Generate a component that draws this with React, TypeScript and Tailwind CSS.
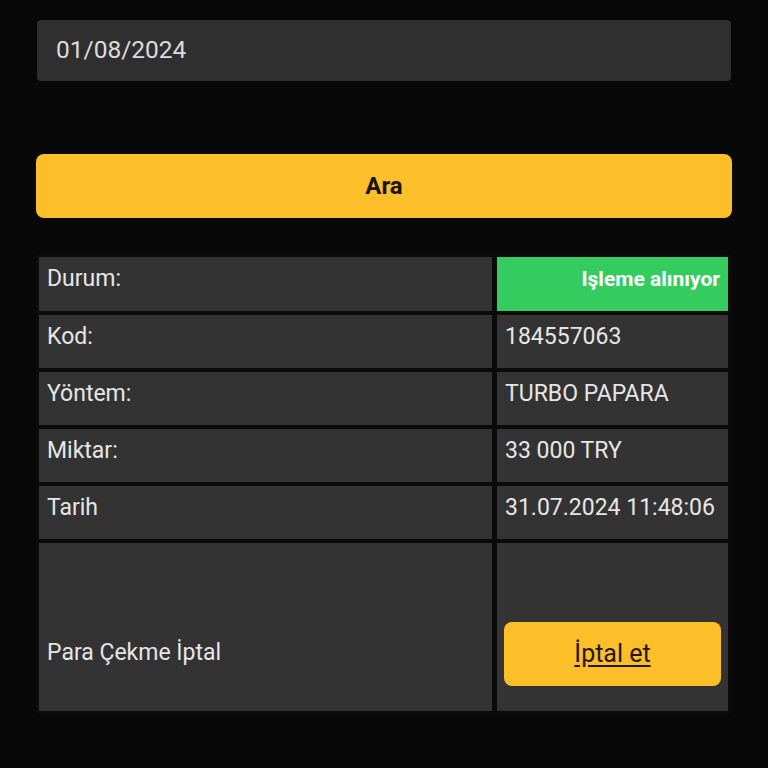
export default function App() {
    const rows = [
        { label: 'Kod:', value: '184557063' },
        { label: 'Yöntem:', value: 'TURBO PAPARA' },
        { label: 'Miktar:', value: '33 000 TRY' },
        { label: 'Tarih', value: '31.07.2024 11:48:06' },
    ];

    return (
        <div className="min-h-[768px] w-[768px] bg-[#080808] px-[36px] pt-[20px] font-['Roboto','Liberation_Sans',sans-serif] text-[#e6e6e6]">
            {/* Date input */}
            <div className="mx-px flex h-[61px] items-center rounded-[4px] bg-[#2f2f2f] px-[19px] text-[24.5px] text-[#dcdcdc]">
                01/08/2024
            </div>

            {/* Search button */}
            <button className="mt-[73px] flex h-[64px] w-full items-center justify-center rounded-[8px] bg-[#fcbf2a] text-[24px] font-bold text-[#1a1406]">
                Ara
            </button>

            {/* Result table */}
            <div className="mt-[36px] grid grid-cols-[453px_231px] gap-x-[5px] gap-y-[4px] bg-[#0b0b0b] px-[3px] py-[3px] text-[23px]">
                <div className="h-[54px] bg-[#333333] pl-[8px] pt-[8px] leading-[28px]">Durum:</div>
                <div className="h-[54px] bg-[#34cb5f] pr-[8px] pt-[8px] text-right text-[21px] font-bold leading-[28px] text-white">
                    Işleme alınıyor
                </div>

                {rows.map((row) => (
                    <div key={row.label} className="contents">
                        <div className="h-[53px] bg-[#333333] pl-[8px] pt-[8px] leading-[28px]">{row.label}</div>
                        <div className="h-[53px] bg-[#333333] pl-[8px] pt-[8px] leading-[28px]">{row.value}</div>
                    </div>
                ))}

                <div className="flex h-[168px] items-center bg-[#333333] pl-[8px] pt-[52px] leading-[28px]">
                    Para Çekme İptal
                </div>
                <div className="flex h-[168px] flex-col justify-end bg-[#333333] px-[7px] pb-[25px]">
                    <button className="flex h-[64px] w-full items-center justify-center rounded-[8px] bg-[#fcbf2a] text-[25px] text-[#231603] underline underline-offset-[3px]">
                        İptal et
                    </button>
                </div>
            </div>
        </div>
    );
}
